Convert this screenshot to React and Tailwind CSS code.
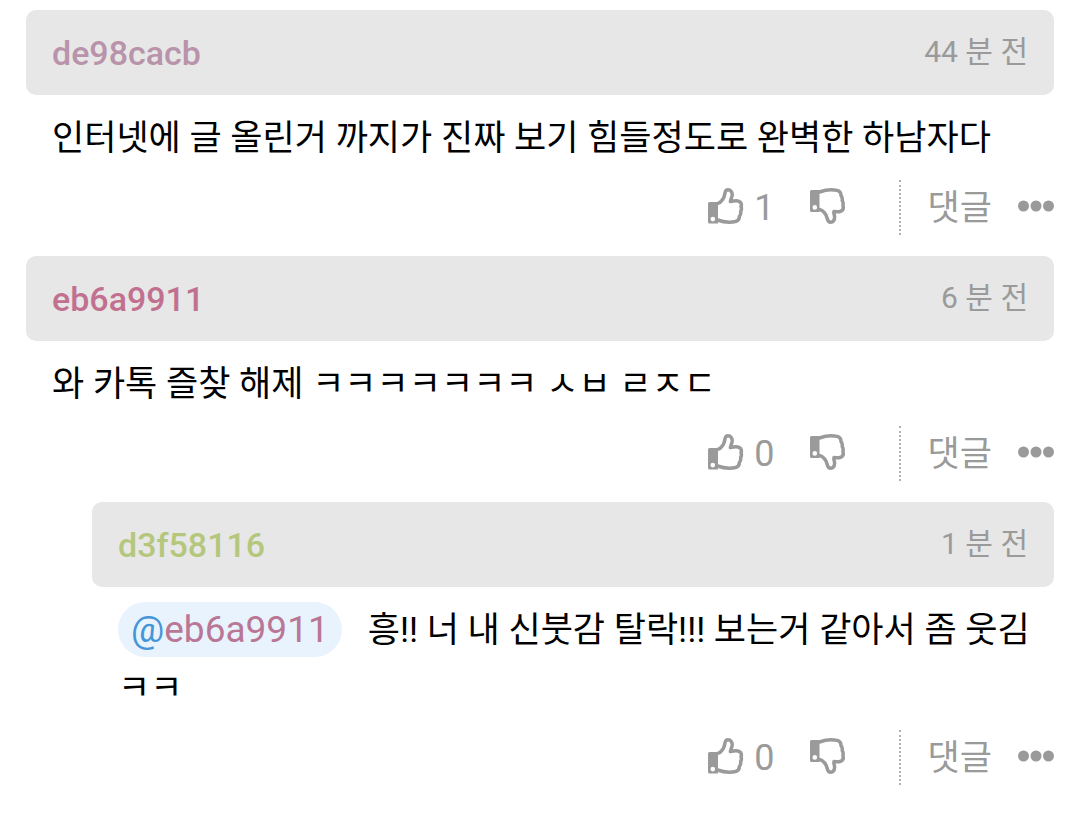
import React from 'react';

const comments = [
  {
    id: 1,
    author: 'de98cacb',
    color: 'text-[#b893aa]',
    time: '44 분 전',
    likes: 1,
    text: '인터넷에 글 올린거 까지가 진짜 보기 힘들정도로 완벽한 하남자다',
  },
  {
    id: 2,
    author: 'eb6a9911',
    color: 'text-[#c1718f]',
    time: '6 분 전',
    likes: 0,
    text: '와 카톡 즐찾 해제 ㅋㅋㅋㅋㅋㅋㅋ ㅅㅂ ㄹㅈㄷ',
  },
  {
    id: 3,
    author: 'd3f58116',
    color: 'text-[#b5c77d]',
    time: '1 분 전',
    likes: 0,
    mention: 'eb6a9911',
    text: '흥!! 너 내 신붓감 탈락!!! 보는거 같아서 좀 웃김 ㅋㅋ',
    isReply: true,
  },
];

const ThumbUp = () => (
  <svg viewBox="0 0 36 36" className="size-9" fill="none" aria-hidden="true">
    <path
      fill="currentColor"
      fillRule="evenodd"
      d="M1.5 14H10V35.5H1.5A1.5 1.5 0 0 1 0 34V15.5A1.5 1.5 0 0 1 1.5 14ZM4.8 28.8a2.3 2.3 0 1 0 0 4.6a2.3 2.3 0 0 0 0-4.6Z"
    />
    <path
      stroke="currentColor"
      strokeWidth="3.5"
      strokeLinejoin="round"
      strokeLinecap="round"
      d="M9.5 15.5C11.5 15.3 12.8 14 13.8 12.5C16 10.5 16.6 7.5 17 5C17.3 3 18.3 1.8 20 1.8C22.600 1.800 24.400 4 24.200 7C24 9.500 22.600 11.500 22.400 13.600C25.500 12.900 29 12.500 31 13.300C33.300 14.200 33.900 16.500 33 18.500C33.700 20.300 33.500 22.200 32.600 23.700C33 25.500 32.500 27.200 31.400 28.400C31.400 31.200 30 32.700 27.500 33.500C22 34.800 15.500 34.200 9.500 32"
    />
  </svg>
);

const ThumbDown = () => (
  <svg viewBox="0 0 36 36" className="size-9" fill="none" aria-hidden="true">
    <path
      fill="currentColor"
      fillRule="evenodd"
      d="M1.5 2H9.5V24H1.5A1.5 1.5 0 0 1 0 22.5V3.5A1.5 1.5 0 0 1 1.5 2ZM4.8 17.1a2.3 2.3 0 1 0 0 4.6a2.3 2.3 0 0 0 0-4.6Z"
    />
    <path
      stroke="currentColor"
      strokeWidth="3.5"
      strokeLinejoin="round"
      strokeLinecap="round"
      d="M9.5 4C15.5 1.8 22 1.3 27 2.4C29.8 3 31 4.7 31 7.5C32.200 8.900 32.600 10.500 32.200 12.500C33.200 14 33.400 15.700 32.900 17.500C33.700 20 33 22.200 31 23.100C29 24 26 23.900 24 23.500C23.300 25.500 24.600 26.700 24.600 29C24.600 32.300 23 34.200 20.500 34.200C18.600 34.200 17.800 33 17.200 30.500C16.500 27.500 15.500 25.800 14 24.300C12.800 22.700 11.500 21.800 9.500 21.500"
    />
  </svg>
);

const MoreDots = () => (
  <svg viewBox="0 0 36 12" className="h-3 w-9" fill="currentColor" aria-hidden="true">
    <circle cx="5.5" cy="6" r="5.5" />
    <circle cx="18" cy="6" r="5.5" />
    <circle cx="30.5" cy="6" r="5.5" />
  </svg>
);

const CommentActions = ({ likes }) => (
  <div className="mt-3 flex h-[55px] items-center justify-end text-[#9a9a9a]">
    <button type="button" aria-label="추천" className="flex items-center gap-2.5 text-[36px] leading-[55px]">
      <span className="pb-1"><ThumbUp /></span>
      <span className="pt-0.5">{likes}</span>
    </button>
    <button type="button" aria-label="비추천" className="ml-[35px] pb-1">
      <ThumbDown />
    </button>
    <div className="ml-[53px] h-full border-l-2 border-dotted border-[#b0b0b0]" />
    <button type="button" className="ml-[27px] pt-0.5 text-[35px] leading-[55px]">댓글</button>
    <button type="button" aria-label="더보기" className="ml-[26px] pb-1">
      <MoreDots />
    </button>
  </div>
);

const Comment = ({ comment }) => (
  <article className={comment.isReply ? 'ml-[66px]' : ''}>
    <header className="flex h-[85px] items-center justify-between rounded-[10px] bg-[#e7e7e7] px-[26px]">
      <a href="#" className={`pt-0.5 text-[34px] font-medium ${comment.color}`}>{comment.author}</a>
      <time className="pb-0.5 text-[30px] text-[#9a9a9a]">{comment.time}</time>
    </header>
    <p className="mt-[15px] pr-5 pl-[26px] text-[35px] leading-[58px] text-black">
      {comment.mention && (
        <a
          href="#"
          className="mr-[26px] inline-block rounded-full bg-[#e8f3fd] px-[13px] align-top text-[37px] leading-[55px] text-[#b97795]"
        >
          <span className="text-[#4595d8]">@</span>
          <span>{comment.mention}</span>
        </a>
      )}
      {comment.text}
    </p>
    <CommentActions likes={comment.likes} />
  </article>
);

const App = () => {
  return (
    <main className="flex flex-col gap-[21px] bg-white px-[26px] pt-[10px] pb-8 font-['Roboto','Noto_Sans_CJK_KR',sans-serif]">
      {comments.map((comment) => (
        <Comment key={comment.id} comment={comment} />
      ))}
    </main>
  );
};

export default App;
